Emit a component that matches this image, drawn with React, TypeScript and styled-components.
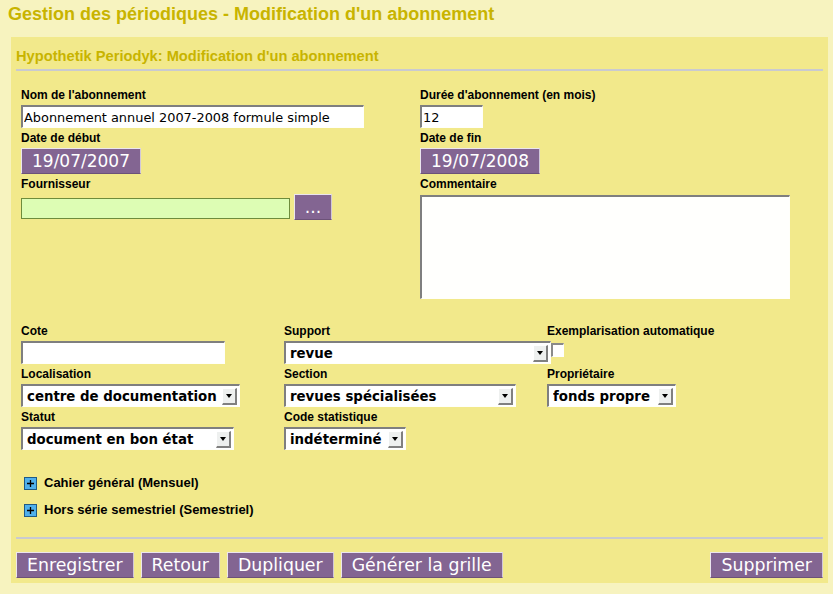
import React from "react";
import styled, { createGlobalStyle } from "styled-components";

const GlobalStyle = createGlobalStyle`
  html, body { margin: 0; padding: 0; background: #f7f3bf; }
  body {
    font-family: "Liberation Sans", Arial, sans-serif;
    width: 833px;
    height: 594px;
    overflow: hidden;
  }
`;

const PageTitle = styled.h1`
  margin: 0;
  padding: 4px 0 0 8px;
  height: 33px;
  font-size: 18px;
  line-height: 20px;
  font-weight: bold;
  color: #c8b400;
  white-space: nowrap;
`;

const Panel = styled.div`
  margin: 0 5px 0 11px;
  background: #f2e98b;
  padding: 11px 5px 5px 5px;
`;

const PanelHeader = styled.h2`
  margin: 0;
  font-size: 14.67px;
  line-height: 17px;
  font-weight: bold;
  color: #c8b400;
  padding-bottom: 4px;
  border-bottom: 2px solid #c9cad0;
`;

const FormArea = styled.div`
  padding: 17px 0 0 5px;
`;

const TopGrid = styled.div`
  display: grid;
  grid-template-columns: 399px 1fr;
  align-items: start;
`;

const BottomGrid = styled.div`
  display: grid;
  grid-template-columns: 263px 263px 1fr;
  margin-top: 22px;
`;

const Column = styled.div`
  display: flex;
  flex-direction: column;
`;

const Field = styled.div`
  display: flex;
  flex-direction: column;
  align-items: flex-start;
  margin-bottom: 3px;
`;

const Label = styled.label`
  display: block;
  font-size: 12px;
  line-height: 14px;
  font-weight: bold;
  color: #000;
  margin-bottom: 3px;
  white-space: nowrap;
`;

const TextInput = styled.input<{ $w: number }>`
  box-sizing: border-box;
  width: ${(p) => p.$w}px;
  height: 23px;
  margin: 0;
  padding: 0 0 0 1px;
  background: #fff;
  border-style: solid;
  border-width: 2px 1px 1px 2px;
  border-color: #7f7f7f #fffffa #fffffa #7f7f7f;
  font-family: "DejaVu Sans", sans-serif;
  font-size: 12.9px;
  color: #000;
  outline: none;
`;

const SupplierInput = styled.input`
  box-sizing: border-box;
  width: 269px;
  height: 21px;
  margin: 0 0 1px 0;
  padding: 0 2px;
  background: #ddfdb4;
  border: 1px solid #6e8c3c;
  font-family: "DejaVu Sans", sans-serif;
  font-size: 12.9px;
  outline: none;
`;

const CommentArea = styled.textarea`
  box-sizing: border-box;
  width: 370px;
  height: 104px;
  margin: 1px 0 0 0;
  padding: 1px;
  resize: none;
  background: #fffffd;
  border-style: solid;
  border-width: 2px 1px 1px 2px;
  border-color: #7f7f7f #fffffa #fffffa #7f7f7f;
  font-family: "DejaVu Sans", sans-serif;
  font-size: 12.9px;
  outline: none;
`;

const PurpleButton = styled.button`
  box-sizing: border-box;
  height: 26px;
  margin: 0;
  padding: 0 10px;
  background: #836592;
  color: #fff;
  font-family: "DejaVu Sans", sans-serif;
  font-size: 17.33px;
  line-height: 24px;
  border: 1px solid;
  border-color: #ebe5ee #d2c8d8 #6c5278 #ebe5ee;
  white-space: nowrap;
  cursor: pointer;
`;

const DateButton = styled(PurpleButton)`
  font-size: 17px;
`;

const DotsButton = styled(PurpleButton)`
  width: 38px;
  padding: 0;
  text-align: center;
`;

const SupplierRow = styled.div`
  display: flex;
  align-items: flex-end;
  gap: 4px;
`;

const SelectBox = styled.div<{ $w: number }>`
  box-sizing: border-box;
  width: ${(p) => p.$w}px;
  height: 23px;
  display: flex;
  align-items: center;
  background: #fff;
  border-style: solid;
  border-width: 2px 1px 1px 2px;
  border-color: #7f7f7f #fffffa #fffffa #7f7f7f;
  padding-left: 4px;
  font-family: "DejaVu Sans", sans-serif;
  font-weight: bold;
  font-size: 13.33px;
  color: #000;
`;

const SelectText = styled.span`
  flex: 1;
  white-space: nowrap;
  overflow: hidden;
`;

const SelectArrow = styled.span`
  box-sizing: border-box;
  width: 15px;
  height: 17px;
  margin-right: 2px;
  background: #eef0ef;
  border-style: solid;
  border-width: 1px 2px 2px 1px;
  border-color: #fff #808080 #808080 #fff;
  display: flex;
  align-items: center;
  justify-content: center;
  &::after {
    content: "";
    border-left: 3.5px solid transparent;
    border-right: 3.5px solid transparent;
    border-top: 4px solid #000;
  }
`;

const CheckBox = styled.span`
  box-sizing: border-box;
  display: block;
  width: 13px;
  height: 14px;
  margin: 2px 0 0 4px;
  background: #fff;
  border-style: solid;
  border-width: 2px 1px 1px 2px;
  border-color: #8a8a8a #fff #fff #8a8a8a;
`;

const ExpandList = styled.div`
  margin-top: 23px;
  display: flex;
  flex-direction: column;
  gap: 13px;
`;

const ExpandRow = styled.div`
  display: flex;
  align-items: center;
  gap: 7px;
  padding-left: 3px;
  font-size: 13px;
  line-height: 14px;
  font-weight: bold;
  color: #000;
`;

const Separator = styled.div`
  margin-top: 20px;
  border-top: 2px solid #c9cad0;
`;

const ButtonBar = styled.div`
  display: flex;
  gap: 7px;
  margin-top: 13px;
`;

const RightButton = styled(PurpleButton)`
  margin-left: auto;
`;

const Select = ({ w, value }: { w: number; value: string }) => (
  <SelectBox $w={w}>
    <SelectText>{value}</SelectText>
    <SelectArrow />
  </SelectBox>
);

const PlusIcon = () => (
  <svg width="13" height="13" viewBox="0 0 13 13">
    <rect x="0.5" y="0.5" width="12" height="12" fill="#4fb0ec" stroke="#1f5a86" />
    <path d="M3 6.5H10M6.5 3V10" stroke="#000" strokeWidth="1.3" />
  </svg>
);

export default function App() {
  return (
    <>
      <GlobalStyle />
      <PageTitle>Gestion des périodiques - Modification d'un abonnement</PageTitle>
      <Panel>
        <PanelHeader>Hypothetik Periodyk: Modification d'un abonnement</PanelHeader>
        <FormArea>
          <TopGrid>
            <Column>
              <Field>
                <Label>Nom de l'abonnement</Label>
                <TextInput $w={343} readOnly defaultValue="Abonnement annuel 2007-2008 formule simple" />
              </Field>
              <Field>
                <Label>Date de début</Label>
                <DateButton>19/07/2007</DateButton>
              </Field>
              <Field>
                <Label>Fournisseur</Label>
                <SupplierRow>
                  <SupplierInput readOnly defaultValue="" />
                  <DotsButton>...</DotsButton>
                </SupplierRow>
              </Field>
            </Column>
            <Column>
              <Field>
                <Label>Durée d'abonnement (en mois)</Label>
                <TextInput $w={63} readOnly defaultValue="12" />
              </Field>
              <Field>
                <Label>Date de fin</Label>
                <DateButton>19/07/2008</DateButton>
              </Field>
              <Field>
                <Label>Commentaire</Label>
                <CommentArea readOnly defaultValue="" />
              </Field>
            </Column>
          </TopGrid>

          <BottomGrid>
            <Field>
              <Label>Cote</Label>
              <TextInput $w={204} readOnly defaultValue="" />
            </Field>
            <Field>
              <Label>Support</Label>
              <Select w={267} value="revue" />
            </Field>
            <Field>
              <Label>Exemplarisation automatique</Label>
              <CheckBox />
            </Field>

            <Field>
              <Label>Localisation</Label>
              <Select w={219} value="centre de documentation" />
            </Field>
            <Field>
              <Label>Section</Label>
              <Select w={232} value="revues spécialisées" />
            </Field>
            <Field>
              <Label>Propriétaire</Label>
              <Select w={129} value="fonds propre" />
            </Field>

            <Field>
              <Label>Statut</Label>
              <Select w={213} value="document en bon état" />
            </Field>
            <Field>
              <Label>Code statistique</Label>
              <Select w={122} value="indéterminé" />
            </Field>
          </BottomGrid>

          <ExpandList>
            <ExpandRow>
              <PlusIcon />
              <span>Cahier général (Mensuel)</span>
            </ExpandRow>
            <ExpandRow>
              <PlusIcon />
              <span>Hors série semestriel (Semestriel)</span>
            </ExpandRow>
          </ExpandList>
        </FormArea>

        <Separator />
        <ButtonBar>
          <PurpleButton>Enregistrer</PurpleButton>
          <PurpleButton>Retour</PurpleButton>
          <PurpleButton>Dupliquer</PurpleButton>
          <PurpleButton>Générer la grille</PurpleButton>
          <RightButton>Supprimer</RightButton>
        </ButtonBar>
      </Panel>
    </>
  );
}
